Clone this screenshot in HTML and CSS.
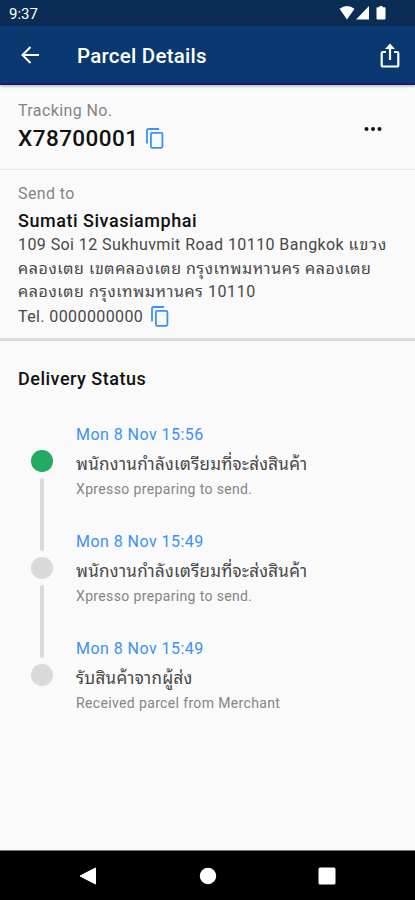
FILE: index.html
```html
<!DOCTYPE html>
<html lang="th">
<head>
<meta charset="utf-8">
<title>Parcel Details</title>
<link rel="stylesheet" href="styles.css">
</head>
<body>
<div class="screen">
  <div class="status-bar">
    <span class="clock">9:37</span>
    <svg class="status-icons" width="50" height="16" viewBox="0 0 50 16" fill="#fff">
      <path d="M0.5 3.8Q8 -1.8 15.5 3.8L8 14.5Z"/>
      <path d="M30 1V14.5H17Z"/>
      <path d="M38.5 2.200h2V1h3v1.200h2q1 0 1 1v10.300q0 1-1 1h-7q-1 0-1-1V3.200q0-1 1-1z"/>
    </svg>
  </div>
  <header class="app-bar">
    <svg class="back" width="18" height="18" viewBox="0 0 18 18" fill="none" stroke="#fff" stroke-width="2"><path d="M18 9H2M9.500 1L1.500 9l8 8"/></svg>
    <h1>Parcel Details</h1>
    <svg class="share" width="20" height="26" viewBox="0 0 20 26" fill="none" stroke="#fff" stroke-width="2.200"><path d="M6 9H3q-1.300 0-1.300 1.300v11.700q0 1.500 1.300 1.500h14q1.300 0 1.300-1.500v-11.700Q18.300 9 17 9h-3M10 17V3"/><path d="M10 .5l5 5.500H5z" fill="#fff" stroke="none"/></svg>
  </header>
  <section class="tracking">
    <div>
      <p class="label">Tracking No.</p>
      <p class="number">X78700001 <svg class="copy" width="18" height="21" viewBox="0 0 18 21" fill="none" stroke="#3b91f5" stroke-width="1.800"><path d="M1 15.500V2.500Q1 1 2.500 1H13"/><rect x="4.900" y="4.800" width="11.500" height="15" rx="1.200"/></svg></p>
    </div>
    <svg class="more" width="18" height="6" viewBox="0 0 18 6"><circle cx="2.500" cy="3" r="2"/><circle cx="9" cy="3" r="2"/><circle cx="15.500" cy="3" r="2"/></svg>
  </section>
  <section class="recipient">
    <p class="label">Send to</p>
    <p class="name">Sumati Sivasiamphai</p>
    <p class="address">109 Soi 12 Sukhuvmit Road 10110 Bangkok <span class="district">แขวง</span><br><span class="area">คลองเตย เขตคลองเตย กรุงเทพมหานคร คลองเตย</span><br><span class="area">คลองเตย กรุงเทพมหานคร 10110</span></p>
    <p class="phone">Tel. 0000000000 <svg class="copy" width="18" height="21" viewBox="0 0 18 21" fill="none" stroke="#3b91f5" stroke-width="1.800"><path d="M1 15.500V2.500Q1 1 2.500 1H13"/><rect x="4.900" y="4.800" width="11.500" height="15" rx="1.200"/></svg></p>
  </section>
  <main class="delivery">
    <h2>Delivery Status</h2>
    <ol class="timeline">
      <li class="event current">
        <div class="rail"><i class="dot"></i><i class="line"></i></div>
        <div class="info"><p class="date">Mon 8 Nov 15:56</p><p class="thai">พนักงานกำลังเตรียมที่จะส่งสินค้า</p><p class="detail">Xpresso preparing to send.</p></div>
      </li>
      <li class="event">
        <div class="rail"><i class="dot"></i><i class="line"></i></div>
        <div class="info"><p class="date">Mon 8 Nov 15:49</p><p class="thai">พนักงานกำลังเตรียมที่จะส่งสินค้า</p><p class="detail">Xpresso preparing to send.</p></div>
      </li>
      <li class="event">
        <div class="rail"><i class="dot"></i></div>
        <div class="info"><p class="date">Mon 8 Nov 15:49</p><p class="thai">รับสินค้าจากผู้ส่ง</p><p class="detail">Received parcel from Merchant</p></div>
      </li>
    </ol>
  </main>
  <nav class="nav-bar">
    <svg width="18" height="18" viewBox="0 0 18 18"><path d="M16.500 1v16L1 9z" fill="#fff" stroke="#fff" stroke-linejoin="round"/></svg>
    <svg width="18" height="18" viewBox="0 0 18 18"><circle cx="9" cy="9" r="8.200" fill="#fff"/></svg>
    <svg width="18" height="18" viewBox="0 0 18 18"><rect x=".5" y=".5" width="17" height="17" rx="1.500" fill="#fff"/></svg>
  </nav>
</div>
</body>
</html>
```
FILE: styles.css
```css
* { box-sizing: border-box; margin: 0; padding: 0; }
body { font-family: Roboto, "Noto Sans Thai Looped", "Noto Looped Thai", "Loma", "Noto Sans Thai", "Noto Sans", sans-serif; background: #fafafa; color: #484848; }
.screen { width: 415px; height: 900px; display: flex; flex-direction: column; overflow: hidden; }
.status-bar { height: 26px; background: #092d55; display: flex; justify-content: space-between; padding: 5px 26px 0 9px; color: #fff; }
.clock { font-size: 15px; line-height: 18px; font-weight: 400; }
.app-bar { height: 59px; background: #0a3871; border-bottom: 2px solid #17197a; display: flex; align-items: center; padding: 2px 15px 0 21px; color: #fff; box-shadow: 0 1px 3px #0005; }
.app-bar h1 { font-size: 20.500px; font-weight: 500; margin-left: 38px; flex: 1; letter-spacing: .25px; }
.back { margin-top: -1px; }
.tracking { height: 85px; padding: 16px 33px 0 18px; display: flex; justify-content: space-between; border-bottom: 1px solid #e9e9e9; }
.label { font-size: 16px; line-height: 20px; color: #858585; letter-spacing: .4px; }
.number { font-size: 22.500px; line-height: 28px; height: 28px; margin-top: 3px; font-weight: 500; color: #111; letter-spacing: .45px; display: flex; align-items: center; gap: 7px; }
.number .copy { margin-top: 1px; }
.more { margin-top: 25px; fill: #111; }
.recipient { height: 171px; padding: 14px 0 0 18px; border-bottom: 3px solid #dcdcdc; }
.name { font-size: 18px; line-height: 24px; margin-top: 5px; font-weight: 500; color: #111; letter-spacing: .53px; }
.address { font-size: 16px; line-height: 23.500px; white-space: nowrap; letter-spacing: .42px; }
.district { letter-spacing: 1px; }
.area { letter-spacing: .57px; }
.phone { font-size: 16px; line-height: 24px; height: 24px; letter-spacing: .4px; display: flex; align-items: center; gap: 8px; margin-top: 1px; }
.delivery { flex: 1; padding: 26px 18px 0; }
.delivery h2 { font-size: 18px; line-height: 24px; font-weight: 500; color: #111; letter-spacing: .5px; }
.timeline { list-style: none; margin-top: 33px; padding-left: 13px; }
.event { height: 107px; display: flex; gap: 23px; }
.rail { width: 22px; display: flex; flex-direction: column; align-items: center; padding-top: 26px; }
.dot { width: 21.500px; height: 21.500px; border-radius: 50%; background: #dadada; flex: none; }
.current .dot { background: #24aa62; }
.line { width: 4px; height: 73px; margin-top: 6px; border-radius: 2px; background: #dadada; flex: none; }
.info { white-space: nowrap; }
.date { font-size: 16px; line-height: 22px; color: #3b91f5; letter-spacing: .45px; }
.thai { font-size: 17px; line-height: 24px; margin-top: 6px; letter-spacing: .27px; }
.detail { font-size: 14px; line-height: 20px; margin-top: 3px; color: #858585; letter-spacing: .36px; }
.nav-bar { height: 50px; background: #000; border-top: 1px solid #777; display: flex; justify-content: space-between; align-items: center; padding: 0 79px; }
```
